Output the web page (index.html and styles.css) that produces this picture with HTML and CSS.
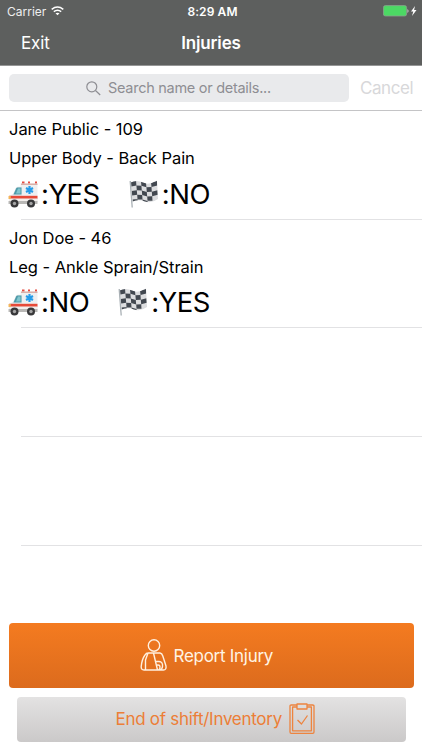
FILE: index.html
```
<!DOCTYPE html>
<html lang="en">
<head>
<meta charset="utf-8">
<title>Injuries</title>
<link rel="stylesheet" href="styles.css">
</head>
<body>
<svg class="defs" width="0" height="0" aria-hidden="true">
  <symbol id="ambulance" viewBox="0 0 30 28">
    <path d="M14 1.500h2.500v3h-2.500zM20 1.500h2v3h-2zM27 1.500h2v3h-2z" fill="#e64a3f"/>
    <path d="M12.500 3.500h17v19h-17z" fill="#eeeff0"/>
    <path d="M13 3.500h16.500v1.500H13z" fill="#d9afa9"/>
    <path d="M1 16l4-2 3-6q.5-1.300 2-1.300h4V24H1z" fill="#e4e7e8"/>
    <path d="M5.500 14.500l2.600-6q.5-1 1.600-1h3.800v7z" fill="#4d9aa9"/>
    <path d="M8 13.500l2-5h2.500v5z" fill="#83c6ce"/>
    <path d="M1 15.800h28.500v3H1z" fill="#e74a38"/>
    <path d="M1 18.600h28.500v2.600H1z" fill="#f3efed"/>
    <path d="M.5 21h29v3H.5z" fill="#b9b8b6"/>
    <path d="M.5 16h2.300v3H.5z" fill="#f3b55a"/>
    <path d="M21.500 6v8M18 8l7 4M18 12l7-4" stroke="#269ce9" stroke-width="2.200"/>
    <circle cx="6.500" cy="23.500" r="4" fill="#38383a"/><circle cx="6.500" cy="23.500" r="1.700" fill="#a5a5a5"/>
    <circle cx="23" cy="23.500" r="4" fill="#38383a"/><circle cx="23" cy="23.500" r="1.700" fill="#a5a5a5"/>
  </symbol>
  <symbol id="flag" viewBox="0 0 30 28">
    <clipPath id="cloth"><path d="M1.500 2.500Q8-.5 14 2.500T28 .5L29 19Q22 24 16 21.500T3.500 21.500z"/></clipPath>
    <g clip-path="url(#cloth)">
      <path d="M0 0h30v28H0z" fill="#dcdddf"/>
      <path d="M2 1.500l5-1.200.4 5.200-5 1zM12 1.300l5 1.500.4 4.500-5-1.500zM22 2.500l6-1.500.3 4.500-5.800 1.500zM7.400 5.500l5 .3.400 4.700-5-.2zM17.400 7.300l5.100-.3.300 4.700-5 .2zM2.700 11l5.100-.7.400 4.500-5 .8zM12.800 10.500l5 1.400.4 4.500-5-1.500zM22.800 11.700l5.700-1.500.3 4.500-5.600 1.500zM8.200 14.800l5 .1.300 4.500-5 .1zM18.200 16.400l5-.2.300 4.500-5 .1zM3.500 19.500l5-.5.300 4-5 .5zM13.500 19.400l5 1.500.3 4-5-1z" fill="#424850"/>
    </g>
    <path d="M1.200 1l2 26.500" stroke="#a9b0b5" stroke-width="1.300"/>
  </symbol>
</svg>

<header class="top">
  <div class="status">
    <div class="carrier"><span>Carrier</span>
      <svg class="wifi" width="13" height="10" viewBox="0 0 13 10" fill="none" stroke="#fff" stroke-width="1.500"><path d="M.7 3.300q5.800-4.600 11.600 0M2.800 5.600q3.700-2.900 7.400 0"/><path d="M4.500 7.300q2-1.300 4 0l-2 2z" fill="#fff" stroke="none"/></svg>
    </div>
    <div class="clock">8:29 AM</div>
    <div class="power">
      <svg width="35" height="12" viewBox="0 0 35 12"><rect x=".4" y=".6" width="23.200" height="10.400" rx="2" fill="#4cd964" stroke="#8ca08e" stroke-width=".8"/><path d="M24.500 4q2 2 0 4z" fill="#d5dbd5"/><path d="M32 1l-4 5.500h2.300L29 11l4.500-6h-2.400z" fill="#fff"/></svg>
    </div>
  </div>
  <nav class="nav"><span class="exit">Exit</span><span class="title">Injuries</span><span></span></nav>
</header>

<div class="search">
  <div class="field">
    <svg width="15" height="15" viewBox="0 0 15 15" fill="none" stroke="#8e8e93" stroke-width="1.200"><circle cx="5.800" cy="5.800" r="5"/><path d="M9.500 9.500l4.700 4.500"/></svg>
    <span class="placeholder">Search name or details...</span>
  </div>
  <span class="cancel">Cancel</span>
</div>

<main class="list">
  <section class="row">
    <div class="line">Jane Public - 109</div>
    <div class="line">Upper Body - Back Pain</div>
    <div class="flags"><svg class="emoji"><use href="#ambulance"/></svg><span class="yes">:YES</span><svg class="emoji"><use href="#flag"/></svg><span class="no">:NO</span></div>
  </section>
  <section class="row">
    <div class="line">Jon Doe - 46</div>
    <div class="line">Leg - Ankle Sprain/Strain</div>
    <div class="flags"><svg class="emoji"><use href="#ambulance"/></svg><span class="no">:NO</span><svg class="emoji"><use href="#flag"/></svg><span class="yes">:YES</span></div>
  </section>
  <section class="row"></section>
  <section class="row"></section>
</main>

<footer class="actions">
  <div class="button report">
    <svg width="28" height="33" viewBox="0 0 28 33" fill="none" stroke="#fff0df" stroke-width="1.400" stroke-linejoin="round" stroke-linecap="round"><circle cx="14" cy="6.500" r="5.700"/><path d="M8 14h12q2 .3 2.800 3L26 27q.5 4-2.500 4H4q-3 0-2.800-3.500Q2 20 5 16q1.200-2 3-2zM8 14L5.500 21v9.700M13.500 14L17.500 31M16 22.500h3q4 .3 3.500 5-.2 3-3 3.500M17.500 26q2.500-.3 2.500 2t-1 2.500"/></svg>
    <span>Report Injury</span>
  </div>
  <div class="button inventory">
    <span>End of shift/Inventory</span>
    <svg width="26" height="32" viewBox="0 0 26 32" fill="none" stroke="#ed843f" stroke-width="1.300" stroke-linejoin="round"><path d="M8 2H2.200q-1.200 0-1.200 1.200V29q0 1.300 1.200 1.300h21.600Q25 30.300 25 29V3.200Q25 2 23.800 2H18"/><path d="M8 4H3.600v23.800h18.800V4H18M8 1h10v5H8z"/><path d="M8.500 17l4 4 6-8.500"/></svg>
  </div>
</footer>
</body>
</html>
```
FILE: styles.css
```
* { box-sizing: border-box; }
body {
  margin: 0;
  width: 422px;
  height: 750px;
  display: flex;
  flex-direction: column;
  overflow: hidden;
  background: #fff;
  color: #000;
  font-family: Inter, "Liberation Sans", sans-serif;
}
svg { display: block; flex: none; }
.defs { position: absolute; }
span, .line, .clock { white-space: nowrap; }

.top { height: 66px; background: #5d5f5e; border-bottom: 1px solid #959696; color: #fff; }
.status {
  height: 22px;
  display: grid;
  grid-template-columns: 1fr auto 1fr;
  align-items: center;
  padding: 0 4px 0 7px;
  font-size: 12px;
}
.carrier { display: flex; align-items: center; gap: 5px; color: #eee; letter-spacing: 0; }
.clock { font-weight: 600; letter-spacing: .1px; }
.power { display: flex; justify-content: flex-end; }
.nav {
  height: 42px;
  display: grid;
  grid-template-columns: 1fr auto 1fr;
  align-items: center;
  padding: 0 21px;
  font-size: 17px;
  letter-spacing: -.15px;
}
.title { font-weight: 600; }

.search {
  height: 45px;
  display: flex;
  align-items: center;
  padding: 0 9px;
  border-bottom: 1px solid #c4c4c6;
}
.field {
  width: 340px;
  height: 28px;
  flex: none;
  border-radius: 5px;
  background: #e9eaec;
  color: #8e8e93;
  display: flex;
  align-items: center;
  padding-left: 77px;
  gap: 7px;
  font-size: 14.500px;
  letter-spacing: -.28px;
}
.placeholder { margin-top: -1px; }
.cancel { margin: -1px 0 0 11px; color: #d8d8da; font-size: 17px; letter-spacing: -.45px; }

.list { height: 435px; display: grid; grid-template-rows: repeat(4, 108.700px); }
.row {
  padding: 4px 0 0 9px;
  background: linear-gradient(#e2e2e4, #e2e2e4) 21px 100% / 401px 1px no-repeat;
}
.line { height: 29px; line-height: 29px; font-size: 16.500px; letter-spacing: -.04px; }
.flags { display: flex; align-items: center; height: 41px; font-size: 27.500px; letter-spacing: -.5px; margin-left: -1px; }
.emoji { width: 30px; height: 28px; }
.flags span { margin-left: 3px; }
.flags .emoji:nth-of-type(2) { margin-left: 29px; }

.actions { margin-top: 77px; padding: 0 8.500px; }
.button { display: flex; align-items: center; border-radius: 4px; }
.report {
  width: 405px;
  height: 65px;
  padding-left: 131px;
  gap: 6px;
  background: linear-gradient(#f47b20, #dc6b1d);
  color: #fff4e4;
  font-size: 17px;
  letter-spacing: -.28px;
}
.inventory {
  width: 389px;
  height: 45px;
  margin: 8.500px 0 0 8px;
  padding-left: 99px;
  gap: 7px;
  background: linear-gradient(#e3e2e2, #cbc9c9);
  color: #ec7e37;
  font-size: 17px;
  letter-spacing: -.28px;
}
```
